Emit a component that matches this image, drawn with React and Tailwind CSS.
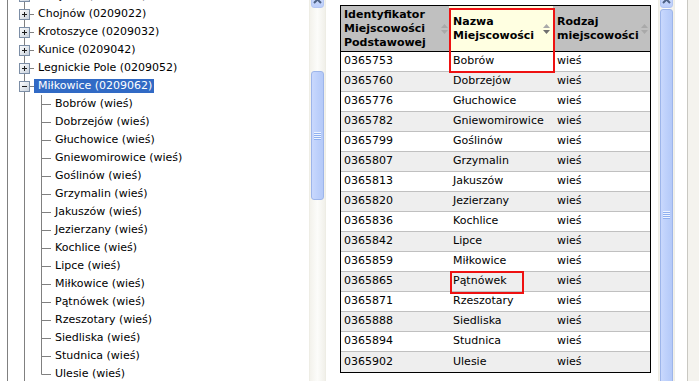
import React from 'react';

const LINE = '#808080';

// tree connector cells (17x18)
const Guide = () => (
  <svg width="17" height="18" className="block shrink-0">
    <line x1="7.5" y1="0" x2="7.5" y2="18" stroke={LINE} />
  </svg>
);

const Branch = ({ last }) => (
  <svg width="17" height="18" className="block shrink-0">
    <line x1="7.5" y1="0" x2="7.5" y2={last ? 9.5 : 18} stroke={LINE} />
    <line x1="7.5" y1="9.5" x2="17" y2="9.5" stroke={LINE} />
  </svg>
);

const Toggle = ({ open }) => (
  <svg width="17" height="18" className="block shrink-0">
    <defs>
      <linearGradient id="tbox" x1="0" y1="0" x2="1" y2="1">
        <stop offset="0" stopColor="#ffffff" />
        <stop offset="1" stopColor="#c6cfda" />
      </linearGradient>
    </defs>
    <line x1="7.5" y1="0" x2="7.5" y2="18" stroke={LINE} />
    <line x1="12" y1="9.5" x2="17" y2="9.5" stroke={LINE} />
    <rect x="2.5" y="4.5" width="10" height="10" fill="url(#tbox)" stroke="#7c8ea6" />
    <line x1="5" y1="9.5" x2="10" y2="9.5" stroke="#1c1c1c" />
    {!open && <line x1="7.5" y1="7" x2="7.5" y2="12" stroke="#1c1c1c" />}
  </svg>
);

const TreeRow = ({ cells, label, selected }) => (
  <div className="flex h-[18px] items-center">
    {cells}
    <span
      className={`h-[14px] whitespace-nowrap pl-[4px] pr-[2px] leading-[14px] ${
        selected ? 'bg-[#316ac5] text-white' : 'text-black'
      }`}
    >
      {label}
    </span>
  </div>
);

const gminy = [
  'Chojnów (0209011)',
  'Chojnów (0209022)',
  'Krotoszyce (0209032)',
  'Kunice (0209042)',
  'Legnickie Pole (0209052)',
];

const rows = [
  ['0365753', 'Bobrów'],
  ['0365760', 'Dobrzejów'],
  ['0365776', 'Głuchowice'],
  ['0365782', 'Gniewomirowice'],
  ['0365799', 'Goślinów'],
  ['0365807', 'Grzymalin'],
  ['0365813', 'Jakuszów'],
  ['0365820', 'Jezierzany'],
  ['0365836', 'Kochlice'],
  ['0365842', 'Lipce'],
  ['0365859', 'Miłkowice'],
  ['0365865', 'Pątnówek'],
  ['0365871', 'Rzeszotary'],
  ['0365888', 'Siedliska'],
  ['0365894', 'Studnica'],
  ['0365902', 'Ulesie'],
];

const SortArrows = ({ active }) => (
  <svg width="7" height="10" className="block shrink-0">
    <polygon points="3.5,0 0,4 7,4" fill="#a9a9a9" />
    <polygon points="0,6 7,6 3.5,10" fill={active ? '#6f6f6f' : '#a9a9a9'} />
  </svg>
);

const Grip = () => (
  <div className="flex flex-col gap-[1px]">
    {[0, 1, 2, 3].map((i) => (
      <div key={i} className="h-[1px] w-[7px] bg-[#eef4ff] shadow-[0_1px_0_#8fb0f0]" />
    ))}
  </div>
);

const Thumb = ({ className }) => (
  <div
    className={`flex items-center justify-center rounded-[3px] border border-[#9db5ea] bg-gradient-to-r from-[#c9d8fd] via-[#bdd0fb] to-[#b4c9f8] ${className}`}
  >
    <Grip />
  </div>
);

const UpButton = () => (
  <div className="-mt-[9px] flex h-[17px] items-end justify-center rounded-[3px] border border-[#b3c6f4] bg-gradient-to-b from-[#d6e2fe] to-[#bccefa] pb-[3px]">
    <svg width="9" height="6">
      <polyline points="1,5 4.5,1.5 8,5" fill="none" stroke="#4d6185" strokeWidth="2" />
    </svg>
  </div>
);

const ScrollBar = ({ thumbClass }) => (
  <div className="flex w-[17px] shrink-0 flex-col border-x border-[#eeede5] bg-gradient-to-r from-[#f3f2ec] via-[#fcfcfa] to-[#f1f0ea] px-[1px]">
    <UpButton />
    <Thumb className={thumbClass} />
  </div>
);

export default function App() {
  return (
    <div className="flex h-[381px] w-[699px] overflow-hidden bg-white font-['DejaVu_Sans',Verdana,sans-serif] text-[11px] text-black">
      {/* tree */}
      <div className="w-[309px] shrink-0 overflow-hidden">
        <div className="-mt-[13px]">
          {gminy.map((g) => (
            <TreeRow key={g} label={g} cells={<><Guide /><Toggle /></>} />
          ))}
          <TreeRow label="Miłkowice (0209062)" selected cells={<><Guide /><Toggle open /></>} />
          {rows.map(([, name], i) => (
            <TreeRow
              key={name}
              label={`${name} (wieś)`}
              cells={<><Guide /><Guide /><Branch last={i === rows.length - 1} /></>}
            />
          ))}
          <TreeRow label="" cells={<><Guide /><Guide /></>} />
        </div>
      </div>

      <ScrollBar thumbClass="mt-[63px] h-[129px]" />

      {/* grid panel */}
      <div className="flex w-[361px] shrink-0">
        <div className="relative ml-[14px] mt-[5px] w-[311px] self-start border border-black">
          <div className="flex h-[46px] border-b border-black bg-[#c0c0c0] font-bold leading-[14px]">
            <div className="flex w-[108px] items-center pl-[3px] pr-[1px]">
              <div className="flex-1">Identyfikator<br />Miejscowości<br />Podstawowej</div>
              <SortArrows />
            </div>
            <div className="flex w-[104px] items-center bg-[#ffffe1] pl-[4px] pr-[3px]">
              <div className="flex-1">Nazwa<br />Miejscowości</div>
              <SortArrows active />
            </div>
            <div className="flex w-[97px] items-center pl-[4px] pr-[2px]">
              <div className="flex-1">Rodzaj<br />miejscowości</div>
              <SortArrows />
            </div>
          </div>
          {rows.map(([id, name], i) => (
            <div
              key={id}
              className={`flex h-[20px] items-center ${i === rows.length - 1 ? 'h-[19px]' : 'border-b border-[#c0c0c0]'} ${
                i % 2 ? 'bg-[#eeeeee]' : 'bg-white'
              }`}
            >
              <div className="w-[108px] pl-[3px]">{id}</div>
              <div className="w-[104px] pl-[4px]">{name}</div>
              <div className="w-[97px] pl-[4px]">wieś</div>
            </div>
          ))}
          {/* highlight frames */}
          <div className="absolute left-[108px] top-[2px] h-[65px] w-[106px] border-2 border-[#ee1111]" />
          <div className="absolute left-[109px] top-[265px] h-[23px] w-[74px] border-2 border-[#ee1111]" />
        </div>
        <div className="ml-[7px]">
          <ScrollBar thumbClass="mt-[1px] h-[410px]" />
        </div>
      </div>

      <div className="flex-1 border-l border-[#c9c8c2] bg-[#f4f3ee]" />
    </div>
  );
}
